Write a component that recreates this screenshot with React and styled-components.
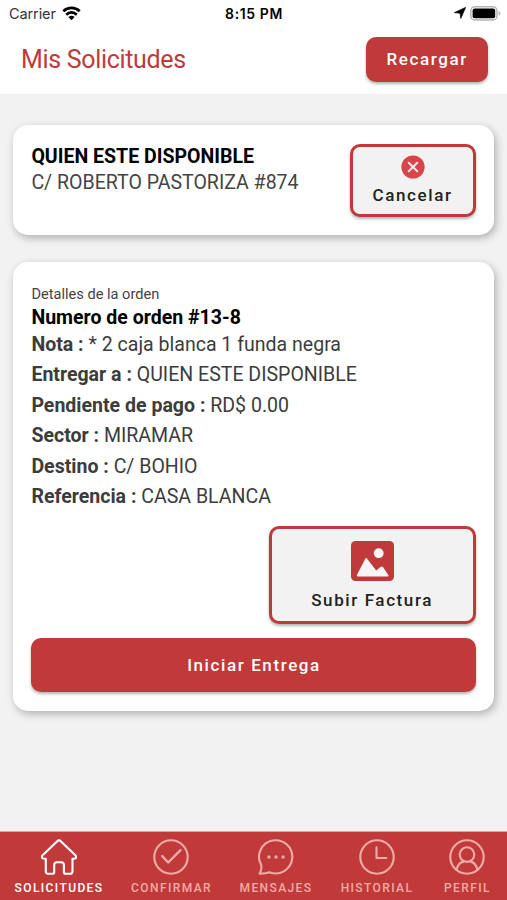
import React from "react";
import styled, { createGlobalStyle } from "styled-components";

const details = [
  { label: "Nota :", value: "* 2 caja blanca 1 funda negra" },
  { label: "Entregar a :", value: "QUIEN ESTE DISPONIBLE" },
  { label: "Pendiente de pago :", value: "RD$ 0.00" },
  { label: "Sector :", value: "MIRAMAR" },
  { label: "Destino :", value: "C/ BOHIO" },
  { label: "Referencia :", value: "CASA BLANCA" },
];

const tabs = [
  { name: "SOLICITUDES", icon: HomeIcon, width: 89, active: true },
  { name: "CONFIRMAR", icon: CheckIcon, width: 79 },
  { name: "MENSAJES", icon: ChatIcon, width: 73 },
  { name: "HISTORIAL", icon: ClockIcon, width: 72 },
  { name: "PERFIL", icon: PersonIcon, width: 52 },
];

export default function App() {
  return (
    <Screen>
      <GlobalStyle />
      <StatusBar>
        <Carrier>
          Carrier
          <WifiIcon />
        </Carrier>
        <Time>8:15 PM</Time>
        <Indicators>
          <LocationIcon />
          <BatteryIcon />
        </Indicators>
      </StatusBar>
      <Header>
        <Title>Mis Solicitudes</Title>
        <ReloadButton>Recargar</ReloadButton>
      </Header>
      <Content>
        <ClientCard>
          <div>
            <ClientName>QUIEN ESTE DISPONIBLE</ClientName>
            <Address>C/ ROBERTO PASTORIZA #874</Address>
          </div>
          <CancelButton>
            <CancelIcon />
            Cancelar
          </CancelButton>
        </ClientCard>
        <OrderCard>
          <Caption>Detalles de la orden</Caption>
          <OrderNumber>Numero de orden #13-8</OrderNumber>
          {details.map(({ label, value }) => (
            <Detail key={label}>
              <b>{label}</b> {value}
            </Detail>
          ))}
          <UploadButton>
            <PictureIcon />
            Subir Factura
          </UploadButton>
          <StartButton>Iniciar Entrega</StartButton>
        </OrderCard>
      </Content>
      <TabBar>
        {tabs.map(({ name, icon: Icon, width, active }) => (
          <Tab key={name} $active={active} $width={width}>
            <Icon />
            <TabLabel>{name}</TabLabel>
          </Tab>
        ))}
      </TabBar>
    </Screen>
  );
}

function WifiIcon() {
  return (
    <svg width="19" height="15" viewBox="0 0 19 15" fill="none" stroke="#000" strokeWidth="2.7">
      <path d="M1.3 5.2C6 .7 13 .7 17.7 5.2" />
      <path d="M4.2 8.7C7.4 5.7 11.6 5.7 14.8 8.7" />
      <path d="M6.4 11.1Q9.5 8.3 12.6 11.1L9.5 14.2Z" fill="#000" stroke="none" />
    </svg>
  );
}

function LocationIcon() {
  return (
    <svg width="12" height="12" viewBox="0 0 12 12">
      <path d="M11.6.4L6.8 11.4 6.1 6.2.4 5.6Z" fill="#000" stroke="#000" strokeWidth=".7" strokeLinejoin="round" />
    </svg>
  );
}

function BatteryIcon() {
  return (
    <svg width="31" height="15" viewBox="0 0 31 15">
      <rect x=".8" y=".8" width="26.2" height="13.2" rx="4" fill="#fff" stroke="#b4b4b4" strokeWidth="1.5" />
      <rect x="2.6" y="2.6" width="22.6" height="9.6" rx="2" fill="#000" />
      <path d="M28.6 5.1Q30.5 5.8 30.5 7.4T28.6 9.7Z" fill="#b4b4b4" />
    </svg>
  );
}

function CancelIcon() {
  return (
    <svg width="24" height="24" viewBox="0 0 24 24">
      <circle cx="12" cy="12" r="11.6" fill="#d94448" />
      <path d="M7.7 7.7l8.6 8.6M16.3 7.7l-8.6 8.6" stroke="#fbe9e9" strokeWidth="2" strokeLinecap="round" />
    </svg>
  );
}

function PictureIcon() {
  return (
    <svg width="43" height="40" viewBox="0 0 43 40">
      <rect width="43" height="40" rx="4.5" fill="#c03a3a" />
      <circle cx="27.7" cy="12.2" r="4.9" fill="#f6f6f6" />
      <path
        d="M7 35.6Q5.2 35.6 6 33.8L14 18.2Q15.2 16 16.5 18.2L25.2 29.5 29.4 26.1Q31 24.9 32.3 26.5L37.3 33.9Q38.2 35.6 36.5 35.6Z"
        fill="#f6f6f6"
      />
    </svg>
  );
}

function HomeIcon() {
  return (
    <TabIcon>
      <path d="M18 1.4Q19 1.4 20 2.4L34.4 16.3Q35.7 17.8 34.8 19 34 20 31.5 19.7V32.2Q31.5 34.8 29 34.8H24.2Q22.9 34.8 22.9 33.4V26Q22.9 23.2 20.2 23.2H16Q13.2 23.2 13.2 26V33.4Q13.2 34.8 11.9 34.8H7.2Q4.8 34.8 4.8 32.2V19.7Q2 20 1.2 19 .3 17.8 1.6 16.3L16 2.4Q17 1.4 18 1.4Z" />
    </TabIcon>
  );
}

function CheckIcon() {
  return (
    <TabIcon>
      <circle cx="18" cy="18" r="16.7" />
      <path d="M9.2 17.2l6 6.3L27.5 11.2" strokeWidth="2.4" />
    </TabIcon>
  );
}

function ChatIcon() {
  return (
    <TabIcon>
      <path d="M3 25.6A16.6 16.6 0 1 1 11.4 33.2Q8.2 34.4 1.6 34.6 4.2 30.5 3 25.6Z" />
      <g fill="currentColor" stroke="none">
        <circle cx="10.9" cy="18" r="1.7" />
        <circle cx="18" cy="18" r="1.7" />
        <circle cx="25.1" cy="18" r="1.7" />
      </g>
    </TabIcon>
  );
}

function ClockIcon() {
  return (
    <TabIcon>
      <circle cx="18" cy="18" r="16.7" />
      <path d="M17.5 8.3V19H27.3" />
    </TabIcon>
  );
}

function PersonIcon() {
  return (
    <TabIcon>
      <circle cx="18" cy="18" r="16.7" />
      <circle cx="18" cy="15.6" r="7.3" />
      <path d="M7.5 31Q9 23.6 15.1 22.4M28.5 31Q27 23.6 20.9 22.4" />
    </TabIcon>
  );
}

const GlobalStyle = createGlobalStyle`
  * {
    box-sizing: border-box;
  }
  body {
    margin: 0;
    background: #f2f2f2;
    font-family: Roboto, "Liberation Sans", sans-serif;
  }
  svg {
    display: block;
    flex-shrink: 0;
  }
`;

const Screen = styled.div`
  height: 900px;
  display: flex;
  flex-direction: column;
  overflow: hidden;
  background: #f2f2f2;
`;

const StatusBar = styled.div`
  height: 26px;
  padding: 0 6px 0 9px;
  display: grid;
  grid-template-columns: 1fr auto 1fr;
  align-items: center;
  background: #fff;
`;

const Carrier = styled.div`
  display: flex;
  align-items: center;
  gap: 6px;
  color: #333;
  font-size: 14.5px;
  font-family: Inter, sans-serif;
  letter-spacing: -0.1px;
`;

const Time = styled.div`
  margin-right: 2px;
  font-family: Inter, sans-serif;
  font-size: 14px;
  font-weight: 600;
  letter-spacing: 0.6px;
`;

const Indicators = styled.div`
  display: flex;
  justify-content: flex-end;
  align-items: center;
  gap: 4px;
`;

const Header = styled.header`
  height: 68px;
  padding: 11px 19px 0 21px;
  display: flex;
  justify-content: space-between;
  align-items: flex-start;
  background: #fff;
`;

const Title = styled.h1`
  margin: 0;
  color: #c03a3a;
  font-size: 25px;
  font-weight: 400;
  line-height: 46px;
  letter-spacing: -0.33px;
`;

const Button = styled.button`
  padding: 0;
  border: none;
  border-radius: 10px;
  background: #c03a3a;
  color: #fff;
  font-family: inherit;
  font-size: 17px;
  font-weight: 500;
  line-height: 20px;
  letter-spacing: 1.6px;
  box-shadow: 0 2px 3px rgba(0, 0, 0, 0.3);
`;

const ReloadButton = styled(Button)`
  width: 122px;
  height: 45px;
  margin-right: 0.4px;
  padding: 0 0 1px 1px;
`;

const IconButton = styled(Button)`
  display: flex;
  flex-direction: column;
  align-items: center;
  border: 3px solid #c03a3a;
  background: #f2f2f2;
  color: #222;
`;

const CancelButton = styled(IconButton)`
  width: 126px;
  height: 73px;
  padding-top: 8px;
  gap: 6px;
`;

const UploadButton = styled(IconButton)`
  width: 207px;
  height: 98px;
  margin-top: 13.5px;
  padding-top: 12px;
  gap: 9px;
  align-self: flex-end;
`;

const StartButton = styled(Button)`
  height: 54px;
  margin-top: 14px;
  padding: 0 0 1px 1px;
`;

const Content = styled.main`
  flex: 1;
  padding: 31px 13px 0;
  display: flex;
  flex-direction: column;
  gap: 27px;
`;

const Card = styled.section`
  display: flex;
  border-radius: 15px;
  background: #fff;
  box-shadow: 2px 3px 8px rgba(0, 0, 0, 0.28);
`;

const ClientCard = styled(Card)`
  height: 110px;
  padding: 19px 18.4px 0;
  justify-content: space-between;
  align-items: flex-start;
`;

const OrderCard = styled(Card)`
  height: 449px;
  padding: 20.5px 18.4px 0;
  flex-direction: column;
`;

const ClientName = styled.div`
  margin-top: -1px;
  font-size: 19.55px;
  font-weight: 700;
  line-height: 27px;
`;

const Address = styled.div`
  color: #444;
  font-size: 19.55px;
  line-height: 26px;
`;

const Caption = styled.div`
  color: #444;
  font-size: 14.6px;
  line-height: 22px;
`;

const OrderNumber = styled.div`
  font-size: 19.55px;
  font-weight: 700;
  line-height: 25px;
`;

const Detail = styled.div`
  color: #3c3c3c;
  font-size: 19.55px;
  line-height: 30.5px;
`;

const TabBar = styled.nav`
  height: 68px;
  padding: 7px 14px 0;
  display: flex;
  justify-content: space-between;
  background: #c03a3a;
  box-shadow: 0 -1px 0 #e0a09f;
`;

const Tab = styled.div`
  width: ${(props) => props.$width}px;
  display: flex;
  flex-direction: column;
  align-items: center;
  color: ${(props) => (props.$active ? "#fff" : "#f3aaa6")};
`;

const TabIcon = styled.svg.attrs({ viewBox: "0 0 36 36" })`
  width: 36px;
  height: 36px;
  fill: none;
  stroke: currentColor;
  stroke-width: 2.1;
  stroke-linecap: round;
  stroke-linejoin: round;
`;

const TabLabel = styled.span`
  margin: 6px 0 0 1px;
  font-size: 12px;
  font-weight: 500;
  line-height: 14px;
  letter-spacing: 1.4px;
  white-space: nowrap;
`;
